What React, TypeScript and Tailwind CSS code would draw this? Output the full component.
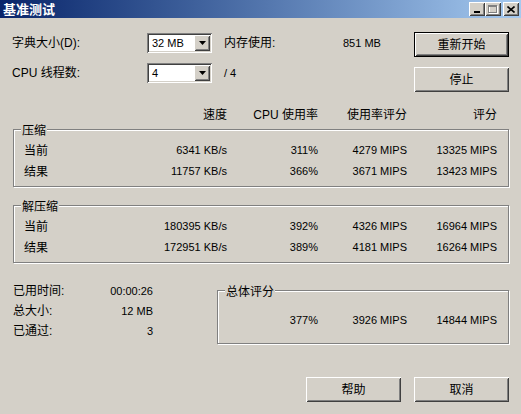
import type { ReactNode } from 'react';

const raised =
  'shadow-[inset_1px_1px_0_#ffffff,inset_-1px_-1px_0_#404040,inset_2px_2px_0_#d4d0c8,inset_-2px_-2px_0_#808080]';
const sunken =
  'shadow-[inset_1px_1px_0_#808080,inset_-1px_-1px_0_#ffffff,inset_2px_2px_0_#404040,inset_-2px_-2px_0_#d4d0c8]';

const cols = 'grid grid-cols-[113px_90px_91px_89px_90px] items-center';

const WinButton = ({ label, isDefault = false }: { label: string; isDefault?: boolean }) => (
  <div className={`w-[95px] h-[25px] bg-[#d4d0c8] ${isDefault ? 'border border-black' : ''}`}>
    <div className={`w-full h-full flex items-center justify-center text-[12px] ${raised}`}>{label}</div>
  </div>
);

const Combo = ({ value }: { value: string }) => (
  <div className={`w-[65px] h-[20px] bg-white flex items-center ${sunken}`}>
    <span className="flex-1 pl-[5px]">{value}</span>
    <div className={`w-[16px] h-[16px] mr-[2px] bg-[#d4d0c8] flex items-center justify-center ${raised}`}>
      <svg width="7" height="4" viewBox="0 0 7 4">
        <path d="M0 0h7L3.5 4z" fill="#000" />
      </svg>
    </div>
  </div>
);

const GroupBox = ({ title, className = '', children }: { title: string; className?: string; children: ReactNode }) => (
  <div
    className={`relative border border-[#808080] shadow-[inset_1px_1px_0_#ffffff,1px_1px_0_#ffffff] ${className}`}
  >
    <span className="absolute -top-[6px] left-[7px] px-[1px] bg-[#d4d0c8] text-[12px] leading-[14px]">{title}</span>
    {children}
  </div>
);

const Row = ({ label, values }: { label: string; values: string[] }) => (
  <div className={`${cols} h-[21px]`}>
    <span className="text-[12px]">{label}</span>
    {values.map((v, i) => (
      <span key={i} className="text-right">
        {v}
      </span>
    ))}
  </div>
);

const TitleButton = ({ children, className = '' }: { children: ReactNode; className?: string }) => (
  <div className={`w-[16px] h-[14px] bg-[#d4d0c8] flex items-center justify-center ${raised} ${className}`}>
    {children}
  </div>
);

export default function App() {
  return (
    <div
      className="w-[521px] h-[414px] bg-[#d4d0c8] flex flex-col text-[11px] text-black leading-none overflow-hidden"
      style={{ fontFamily: '"Liberation Sans", "Noto Sans CJK SC", sans-serif' }}
    >
      {/* title bar */}
      <div className="h-[18px] shrink-0 flex items-center justify-between pl-[3px] pr-[2px] bg-gradient-to-r from-[#0a246a] to-[#a6caf0]">
        <span className="text-white font-bold text-[13px]">基准测试</span>
        <div className="flex items-center">
          <TitleButton>
            <svg width="8" height="7" viewBox="0 0 8 7">
              <rect x="1" y="5" width="6" height="2" fill="#000" />
            </svg>
          </TitleButton>
          <TitleButton>
            <svg width="10" height="9" viewBox="0 0 10 9">
              <rect x="1.5" y="1.5" width="8" height="7" fill="none" stroke="#fff" />
              <rect x="0.5" y="0.5" width="8" height="7" fill="none" stroke="#808080" />
              <rect x="0" y="0" width="9" height="2" fill="#808080" />
            </svg>
          </TitleButton>
          <TitleButton className="ml-[2px]">
            <svg width="8" height="7" viewBox="0 0 8 7">
              <path d="M0.5 0.5l7 6M7.5 0.5l-7 6" stroke="#000" strokeWidth="1.6" />
            </svg>
          </TitleButton>
        </div>
      </div>

      <div className="flex flex-col px-[12px]">
        {/* top controls */}
        <div className="flex mt-[14px]">
          <div className="flex-1 flex flex-col">
            <div className="flex items-center h-[20px] mt-[1px]">
              <span className="w-[135px] text-[12px]">字典大小(D):</span>
              <Combo value="32 MB" />
              <span className="ml-[12px] w-[119px] text-[12px]">内存使用:</span>
              <span>851 MB</span>
            </div>
            <div className="flex items-center h-[20px] mt-[10px]">
              <span className="w-[135px] text-[12px]">CPU 线程数:</span>
              <Combo value="4" />
              <span className="ml-[12px]">/ 4</span>
            </div>
          </div>
          <div className="flex flex-col gap-[10px]">
            <WinButton label="重新开始" isDefault />
            <WinButton label="停止" />
          </div>
        </div>

        {/* column headers */}
        <div className={`${cols} h-[14px] mt-[16px] ml-[12px] text-[12px]`}>
          <span />
          <span className="text-right">速度</span>
          <span className="text-right">CPU 使用率</span>
          <span className="text-right">使用率评分</span>
          <span className="text-right">评分</span>
        </div>

        <GroupBox title="压缩" className="mt-[7px] ml-[1px] pt-[10px] pb-[4px] pl-[10px]">
          <Row label="当前" values={['6341 KB/s', '311%', '4279 MIPS', '13325 MIPS']} />
          <Row label="结果" values={['11757 KB/s', '366%', '3671 MIPS', '13423 MIPS']} />
        </GroupBox>

        <GroupBox title="解压缩" className="mt-[18px] ml-[1px] pt-[10px] pb-[4px] pl-[10px]">
          <Row label="当前" values={['180395 KB/s', '392%', '4326 MIPS', '16964 MIPS']} />
          <Row label="结果" values={['172951 KB/s', '389%', '4181 MIPS', '16264 MIPS']} />
        </GroupBox>

        {/* totals */}
        <div className="flex mt-[18px]">
          <div className="ml-[1px] w-[140px] flex flex-col">
            {[
              ['已用时间:', '00:00:26'],
              ['总大小:', '12 MB'],
              ['已通过:', '3'],
            ].map(([k, v]) => (
              <div key={k} className="h-[20px] flex items-center justify-between">
                <span className="text-[12px]">{k}</span>
                <span>{v}</span>
              </div>
            ))}
          </div>
          <GroupBox title="总体评分" className="flex-1 ml-[64px] mt-[9px] pt-[19px] pb-[13px] pl-[9px]">
            <div className="grid grid-cols-[91px_89px_90px] h-[20px] items-center">
              <span className="text-right">377%</span>
              <span className="text-right">3926 MIPS</span>
              <span className="text-right">14844 MIPS</span>
            </div>
          </GroupBox>
        </div>

        <div className="flex justify-end gap-[13px] mt-[33px]">
          <WinButton label="帮助" />
          <WinButton label="取消" />
        </div>
      </div>
    </div>
  );
}
